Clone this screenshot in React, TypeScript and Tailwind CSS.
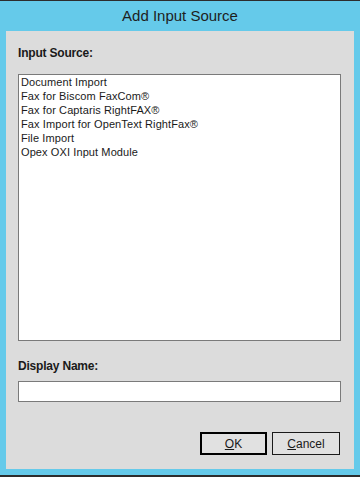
export default function App() {
  const sources = [
    "Document Import",
    "Fax for Biscom FaxCom®",
    "Fax for Captaris RightFAX®",
    "Fax Import for OpenText RightFax®",
    "File Import",
    "Opex OXI Input Module",
  ];

  return (
    <div
      className="w-[360px] h-[477px] flex flex-col bg-[#65caea] border-t border-b-2 border-[#2d2d2d] text-[#1a1a1a]"
      style={{ fontFamily: '"Liberation Sans", Arial, sans-serif' }}
    >
      {/* title bar */}
      <div className="h-[30px] flex items-center justify-center text-[15px] text-[#1e1e1e]">
        Add Input Source
      </div>

      {/* dialog body */}
      <div className="mx-[6px] h-[438px] bg-[#dcdcdc] pt-[14px] pl-[12px] pr-[13px] pb-[14px] flex flex-col">
        <div className="h-[16px] leading-[16px] text-[12px] font-bold tracking-[-0.2px]">
          Input Source:
        </div>
        <div className="mt-[13px] h-[267px] bg-white border border-[#7a7a7a]">
          {sources.map((s) => (
            <div key={s} className="h-[14px] leading-[14px] pl-[2px] text-[11px] tracking-[0.1px] whitespace-nowrap">
              {s}
            </div>
          ))}
        </div>

        <div className="mt-[17px] h-[16px] leading-[16px] text-[12px] font-bold tracking-[-0.2px]">
          Display Name:
        </div>
        <input
          type="text"
          className="mt-[7px] h-[21px] bg-white border border-[#7a7a7a] outline-none px-1 text-[12px]"
        />

        <div className="mt-[30px] flex justify-end gap-[5px] pr-[1px]">
          <button className="w-[67px] h-[23px] bg-[#e1e1e1] border-2 border-black text-[12px] flex items-center justify-center">
            <span>
              <span className="underline">O</span>K
            </span>
          </button>
          <button className="w-[68px] h-[23px] bg-[#e1e1e1] border border-[#1a1a1a] text-[12px] flex items-center justify-center">
            <span>
              <span className="underline">C</span>ancel
            </span>
          </button>
        </div>
      </div>
    </div>
  );
}
